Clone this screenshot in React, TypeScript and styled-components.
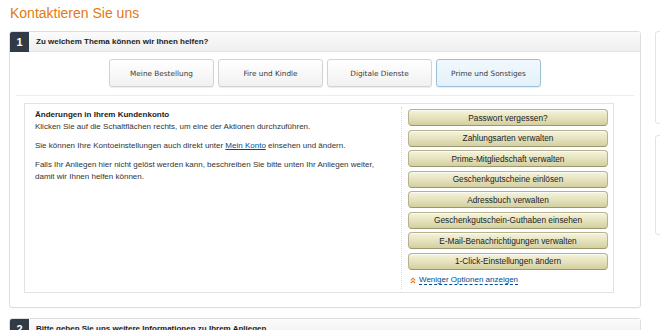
import React from 'react';
import styled, { createGlobalStyle } from 'styled-components';

const GlobalStyle = createGlobalStyle`
    html, body {
        margin: 0;
        padding: 0;
        background: #ffffff;
        font-family: 'Liberation Sans', Arial, sans-serif;
        color: #333333;
        overflow: hidden;
    }
    * {
        box-sizing: border-box;
    }
`;

const topics = ['Meine Bestellung', 'Fire und Kindle', 'Digitale Dienste', 'Prime und Sonstiges'];

const actions = [
    'Passwort vergessen?',
    'Zahlungsarten verwalten',
    'Prime-Mitgliedschaft verwalten',
    'Geschenkgutscheine einlösen',
    'Adressbuch verwalten',
    'Geschenkgutschein-Guthaben einsehen',
    'E-Mail-Benachrichtigungen verwalten',
    '1-Click-Einstellungen ändern',
];

const ChevronsUp = () => (
    <svg width="6" height="7" viewBox="0 0 6 7">
        <path d="M0.8 3.4 L3 1.2 L5.2 3.4" fill="none" stroke="#e47911" strokeWidth="1.1" />
        <path d="M0.8 6.2 L3 4 L5.2 6.2" fill="none" stroke="#e47911" strokeWidth="1.1" />
    </svg>
);

export default function App() {
    return (
        <>
            <GlobalStyle />
            <Page>
                <Main>
                    <Title>Kontaktieren Sie uns</Title>
                    <Panel>
                        <PanelHeader>
                            <StepBadge>1</StepBadge>
                            <HeaderText>Zu welchem Thema können wir Ihnen helfen?</HeaderText>
                        </PanelHeader>
                        <TabRow>
                            {topics.map((t, i) => (
                                <Tab key={t} active={i === 3}>
                                    {t}
                                </Tab>
                            ))}
                        </TabRow>
                        <InnerBox>
                            <InfoColumn>
                                <InfoTitle>Änderungen in Ihrem Kundenkonto</InfoTitle>
                                <InfoText>Klicken Sie auf die Schaltflächen rechts, um eine der Aktionen durchzuführen.</InfoText>
                                <InfoText>
                                    Sie können Ihre Kontoeinstellungen auch direkt unter <InlineLink>Mein Konto</InlineLink> einsehen und ändern.
                                </InfoText>
                                <InfoText>
                                    Falls Ihr Anliegen hier nicht gelöst werden kann, beschreiben Sie bitte unten Ihr Anliegen weiter,
                                    damit wir Ihnen helfen können.
                                </InfoText>
                            </InfoColumn>
                            <ActionColumn>
                                {actions.map((a) => (
                                    <ActionButton key={a}>{a}</ActionButton>
                                ))}
                                <LessOptions>
                                    <ChevronsUp />
                                    <DashedLink>Weniger Optionen anzeigen</DashedLink>
                                </LessOptions>
                            </ActionColumn>
                        </InnerBox>
                    </Panel>
                    <Panel>
                        <PanelHeader>
                            <StepBadge>2</StepBadge>
                            <HeaderText>Bitte geben Sie uns weitere Informationen zu Ihrem Anliegen</HeaderText>
                        </PanelHeader>
                    </Panel>
                </Main>
                <Side>
                    <SideBox tall />
                    <SideBox />
                </Side>
            </Page>
        </>
    );
}

const Page = styled.div`
    display: flex;
    gap: 14px;
    padding-left: 9px;
    width: 700px;
`;

const Main = styled.div`
    width: 632px;
    flex-shrink: 0;
`;

const Title = styled.h1`
    margin: 0;
    padding: 4px 0 0 1px;
    height: 31px;
    font-size: 14px;
    font-weight: normal;
    color: #e47911;
    line-height: 18px;
`;

const Panel = styled.section`
    border: 1px solid #dedede;
    border-radius: 3px;
    background: #ffffff;
    margin-bottom: 10px;
    box-shadow: 0 1px 1px rgba(0, 0, 0, 0.03);
`;

const PanelHeader = styled.div`
    display: flex;
    align-items: center;
    height: 20px;
    background: linear-gradient(#fbfbfb, #efefef);
    border-bottom: 1px solid #e3e3e3;
`;

const StepBadge = styled.span`
    width: 19px;
    height: 20px;
    background: #303b45;
    color: #ffffff;
    font-size: 11px;
    font-weight: bold;
    display: flex;
    align-items: center;
    justify-content: center;
    border-radius: 2px 0 0 0;
`;

const HeaderText = styled.span`
    padding-left: 7px;
    font-size: 8px;
    font-weight: bold;
    color: #222222;
`;

const TabRow = styled.div`
    display: flex;
    justify-content: center;
    gap: 4px;
    padding: 7px 0 8px;
    margin: 0 6px;
    border-bottom: 1px solid #ececec;
`;

const Tab = styled.div<{ active?: boolean }>`
    width: 105px;
    height: 28px;
    display: flex;
    align-items: center;
    justify-content: center;
    font-family: 'DejaVu Sans', Verdana, sans-serif;
    font-size: 7.3px;
    color: #3a3a3a;
    border: 1px solid ${({ active }) => (active ? '#9cbfd8' : '#d3d3d3')};
    border-radius: 3px;
    background: ${({ active }) => (active ? 'linear-gradient(#f1f8fd, #e4f1fa)' : 'linear-gradient(#ffffff, #f1f1f1)')};
    box-shadow: 0 1px 1px rgba(0, 0, 0, 0.08);
`;

const InnerBox = styled.div`
    display: flex;
    justify-content: space-between;
    margin: 7px 26px 14px 14px;
    height: 190px;
    border: 1px solid #e2e2e2;
`;

const InfoColumn = styled.div`
    padding: 5px 0 0 10px;
    font-size: 8px;
    line-height: 12px;
`;

const InfoTitle = styled.div`
    font-weight: bold;
    color: #222222;
`;

const InfoText = styled.p`
    margin: 0 0 7px;
    max-width: 345px;
`;

const InlineLink = styled.a`
    color: #004b91;
    text-decoration: underline;
`;

const ActionColumn = styled.div`
    width: 212px;
    display: flex;
    flex-direction: column;
    gap: 3.5px;
    padding: 2px 5px 0 6px;
    margin: 3px 0;
    border-left: 1px dotted #d8d8d8;
`;

const ActionButton = styled.div`
    height: 17px;
    flex-shrink: 0;
    display: flex;
    align-items: center;
    justify-content: center;
    font-size: 8.3px;
    color: #222222;
    border: 1px solid #b6b190;
    border-bottom-color: #9c9772;
    border-radius: 4px;
    background: linear-gradient(#f6f4dc, #e2dfb9 60%, #d3cf9f);
    box-shadow: inset 0 1px 0 rgba(255, 255, 255, 0.6);
`;

const LessOptions = styled.div`
    display: flex;
    align-items: center;
    gap: 3px;
    margin-top: 2px;
    padding-left: 2px;
    font-size: 8px;
`;

const DashedLink = styled.a`
    color: #004b91;
    border-bottom: 1px dashed #004b91;
    line-height: 9px;
`;

const Side = styled.div`
    display: flex;
    flex-direction: column;
    gap: 11px;
    padding-top: 31px;
`;

const SideBox = styled.div<{ tall?: boolean }>`
    width: 40px;
    height: ${({ tall }) => (tall ? '93px' : '100px')};
    border: 1px solid #e3e3e3;
    border-radius: 3px;
`;
